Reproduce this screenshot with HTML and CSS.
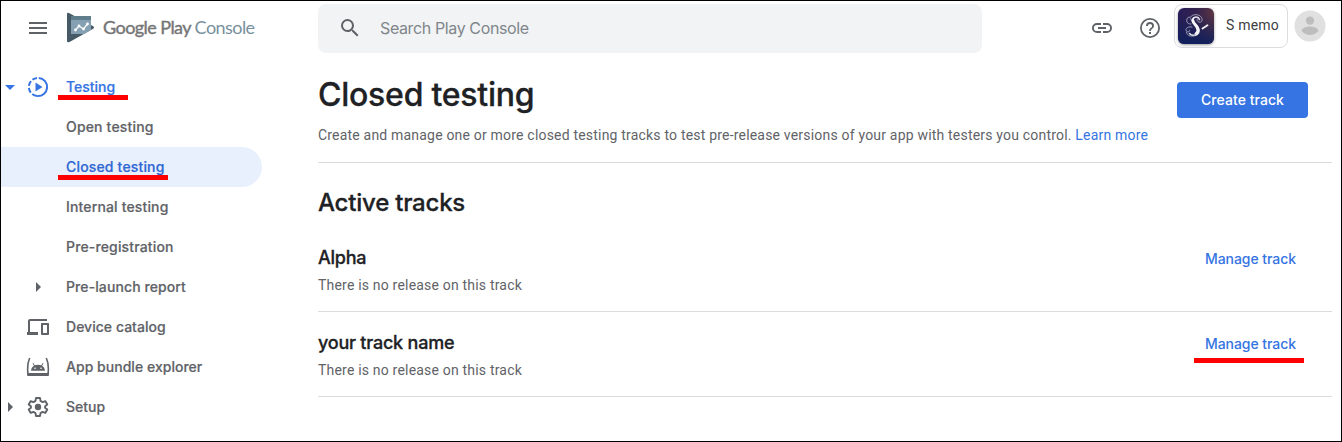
FILE: index.html
```html
<!DOCTYPE html>
<html lang="en">
<head>
<meta charset="utf-8">
<title>Closed testing - Google Play Console</title>
<link rel="stylesheet" href="styles.css">
</head>
<body>
<div class="page">
  <aside class="sidebar">
    <div class="brand">
      <svg class="menu" width="18" height="12" viewBox="0 0 18 12"><path d="M0 0h18v2H0zM0 5h18v2H0zM0 10h18v2H0z" fill="#5f6368"/></svg>
      <svg class="logo" width="28" height="32" viewBox="0 0 28 32">
        <path d="M0 2.200Q0 .3 2 1L26.200 14.200q1.800 1.300 0 2.600L2.500 30Q0 31 0 28.800z" fill="#455a64"/>
        <path d="M4 4h20v14l-7.200 4H4z" fill="#84a0b2"/>
        <path d="M4 4h20v4H4z" fill="#607d8b"/>
        <path d="m8.500 18 3.500-4 4.500 3 4-5" fill="none" stroke="#fff" stroke-width="1.300"/>
        <g fill="#fff"><circle cx="8.500" cy="18" r="1.400"/><circle cx="12" cy="14" r="1.400"/><circle cx="16.500" cy="17" r="1.400"/><circle cx="20.500" cy="12" r="1.400"/></g>
      </svg>
      <span class="wordmark"><b>Google Play</b> <span class="console">Console</span></span>
    </div>
    <nav class="nav">
      <a class="item active"><span class="arrow down"></span>
        <svg class="icon" width="24" height="24" viewBox="0 0 24 24"><path d="M12 2.900a9.100 9.100 0 0 1 0 18.200" fill="none" stroke="currentColor" stroke-width="2" transform="rotate(5 12 12)"/><path d="M11 21.050A9.100 9.100 0 0 1 11 2.950" fill="none" stroke="currentColor" stroke-width="2" stroke-dasharray="5.200 2"/><path d="M9.500 7.500v9l7-4.500z" fill="currentColor"/></svg>
        <span class="label underlined testing">Testing</span></a>
      <a class="item"><span class="label open">Open testing</span></a>
      <a class="item active selected"><span class="label underlined closed">Closed testing</span></a>
      <a class="item"><span class="label internal">Internal testing</span></a>
      <a class="item"><span class="label prereg">Pre-registration</span></a>
      <a class="item nested"><span class="arrow right"></span><span class="label prelaunch">Pre-launch report</span></a>
      <a class="item">
        <svg class="icon" width="24" height="24" viewBox="0 0 24 24"><path d="M4 6h17V4H4c-1.100 0-2 .9-2 2v11H1v3h11v-3H4zM22 8h-6c-.6 0-1 .4-1 1v10c0 .6.4 1 1 1h6c.6 0 1-.4 1-1V9c0-.6-.4-1-1-1zm-1 10h-4v-8h4z" fill="currentColor"/></svg>
        <span class="label device">Device catalog</span></a>
      <a class="item">
        <svg class="icon" width="24" height="24" viewBox="0 0 24 24"><path d="M3.700 3C1.300 8 1.300 13.500 2 19.500h20C22.700 13.500 22.700 8 20.300 3" fill="none" stroke="currentColor" stroke-width="1.600"/><path d="M1.300 18h21.400v3H1.300z" fill="currentColor"/><path d="M5 15.800c.2-2.300 1.200-4 2.900-5.100L6.500 8.300l.7-.4 1.500 2.400c2-.9 4.600-.9 6.600 0l1.500-2.400.7.400-1.400 2.400c1.700 1.100 2.700 2.800 2.900 5.100z" fill="currentColor"/><circle cx="9" cy="13.300" r=".8" fill="#fff"/><circle cx="15" cy="13.300" r=".8" fill="#fff"/></svg>
        <span class="label bundle">App bundle explorer</span></a>
      <a class="item"><span class="arrow right"></span>
        <svg class="icon" width="24" height="24" viewBox="0 0 24 24"><path d="M10 3h4l.5 2.900 2.100 1.200 2.700-1 2 3.400-2.200 1.800v1.400l2.200 1.800-2 3.400-2.700-1-2.100 1.200L14 21h-4l-.5-2.900-2.100-1.200-2.700 1-2-3.400 2.200-1.800v-1.400L2.700 9.500l2-3.400 2.700 1 2.100-1.200z" fill="none" stroke="currentColor" stroke-width="1.900" stroke-linejoin="round"/><circle cx="12" cy="12" r="3.200" fill="currentColor"/></svg>
        <span class="label setup">Setup</span></a>
    </nav>
  </aside>

  <div class="content">
    <header class="topbar">
      <div class="search">
        <svg width="24" height="24" viewBox="0 0 24 24"><path d="M15.500 14h-.79l-.28-.27A6.470 6.470 0 0 0 16 9.500 6.500 6.500 0 1 0 9.500 16c1.610 0 3.090-.59 4.230-1.570l.27.280v.79l5 4.990L20.490 19zm-6 0a4.500 4.500 0 1 1 0-9 4.500 4.500 0 0 1 0 9z" fill="#5f6368"/></svg>
        <span>Search Play Console</span>
      </div>
      <div class="tools">
        <svg class="link" width="24" height="24" viewBox="0 0 24 24"><path d="M3.900 12A3.100 3.100 0 0 1 7 8.900h4V7H7a5 5 0 0 0 0 10h4v-1.900H7A3.100 3.100 0 0 1 3.900 12zM8 13h8v-2H8zm9-6h-4v1.900h4a3.100 3.100 0 0 1 0 6.200h-4V17h4a5 5 0 0 0 0-10z" fill="#5f6368"/></svg>
        <svg class="help" width="24" height="24" viewBox="0 0 24 24"><path d="M11 18h2v-2h-2zm1-16a10 10 0 1 0 0 20 10 10 0 0 0 0-20zm0 18.200a8.200 8.200 0 1 1 0-16.400 8.200 8.200 0 0 1 0 16.400zM12 6a4 4 0 0 0-4 4h1.900a2.100 2.100 0 0 1 4.200 0c0 2-3 1.750-3 5H13c0-2.250 3-2.500 3-5a4 4 0 0 0-4-4z" fill="#5f6368"/></svg>
        <div class="app">
          <svg class="appicon" width="36" height="36" viewBox="0 0 36 36">
            <defs><linearGradient id="night" x1="0" y1="0" x2="1" y2="0"><stop offset="0" stop-color="#271d58"/><stop offset=".5" stop-color="#33224f"/><stop offset="1" stop-color="#5a3442"/></linearGradient><linearGradient id="shade" x1="0" y1="0" x2="0" y2="1"><stop offset=".2" stop-color="#10205c" stop-opacity="0"/><stop offset="1" stop-color="#10205c"/></linearGradient></defs>
            <rect width="36" height="36" fill="url(#night)"/><rect width="36" height="36" fill="url(#shade)"/>
            <g fill="none" stroke="#b9bbcb" stroke-linecap="round"><path d="M21.500 11.500c-1.500-4-7.500-2.500-7 1.500.7 3.500 6.500 5 6.500 9.500 0 5.500-7 6-9.500 3" stroke="#e8e8ee" stroke-width="1.500"/><path d="M14.800 12.500c.7 4 5.700 6 5.200 10-.2 1.500-1 2.700-2 3.300" stroke="#f5f5f8" stroke-width="3"/><path d="M13 16c-3 .5-5-2-4-5s4-2 4 .5M12.500 9c2-3.500 9-3 11 .5s-1 6-3.500 4 0-4 1.500-2M14 19c-4-1-7.500 2-5.500 4s4 0 3-1M8.500 24c0 4.500 6.500 5.500 9.500 2.500" stroke-width=".8"/><path d="m24.500 20.500 5-3.300" stroke="#eee" stroke-width="1.900"/></g>
          </svg>
          <span>S memo</span>
        </div>
        <svg class="avatar" width="32" height="32" viewBox="0 0 32 32"><circle cx="16" cy="16" r="15.500" fill="#e0e0e0"/><circle cx="16" cy="10.600" r="4.200" fill="#bdbdbd"/><path d="M16 16.500c4.700 0 8.300 2.300 8.300 4.100 0 1.600-4.300 4.400-8.300 4.400s-8.300-2.800-8.300-4.400c0-1.800 3.600-4.100 8.300-4.100z" fill="#bdbdbd"/></svg>
      </div>
    </header>

    <main>
      <section class="intro">
        <div>
          <h1>Closed testing</h1>
          <p class="desc">Create and manage one or more closed testing tracks to test pre-release versions of your app with testers you control. <a>Learn more</a></p>
        </div>
        <button class="create"><span>Create track</span></button>
      </section>
      <h2>Active tracks</h2>
      <section class="track">
        <div><h3 class="alpha">Alpha</h3><p>There is no release on this track</p></div>
        <a class="manage">Manage track</a>
      </section>
      <section class="track second">
        <div><h3 class="custom">your track name</h3><p>There is no release on this track</p></div>
        <a class="manage marked">Manage track</a>
      </section>
    </main>
  </div>
</div>
</body>
</html>
```
FILE: styles.css
```css
* { box-sizing: border-box; }
body { margin: 0; background: #fff; }
h1, h2, h3, p { margin: 0; font-weight: 500; }
svg { display: block; flex: none; }

.page {
  display: grid;
  grid-template-columns: 317px 1fr;
  width: 1342px;
  height: 442px;
  border: 1px solid #000;
  overflow: hidden;
  font-family: Inter, "Liberation Sans", sans-serif;
  color: #202124;
}

/* Sidebar */
.brand { display: flex; align-items: center; height: 54px; padding-left: 28px; }
.logo { margin: -1px 0 0 20px; }
.wordmark { margin: -2px 0 0 8px; font: 400 18px/24px Lato, sans-serif; color: #757575; white-space: nowrap; letter-spacing: -0.56px; }
.wordmark b { font-weight: 400; -webkit-text-stroke: .4px #757575; }
.console { color: #78909c; }
.nav { padding-top: 12px; }
.item {
  display: grid;
  grid-template-columns: 25px 24px 1fr;
  align-items: center;
  width: 261px;
  height: 40px;
  font-size: 14px;
  line-height: 20px;
  font-weight: 500;
  color: #5f6368;
}
.item.active { color: #3574e2; }
.item.selected { background: #e8f0fe; color: #2f67d2; border-radius: 0 20px 20px 0; }
.icon { grid-column: 2; }
.label { grid-column: 3; justify-self: start; margin-left: 16px; white-space: nowrap; -webkit-text-stroke: .2px currentColor; }
.open, .closed { letter-spacing: .17px; }
.internal, .prereg { letter-spacing: .15px; }
.prelaunch { letter-spacing: .1px; }
.device, .bundle { letter-spacing: .03px; }
.arrow { grid-column: 1; width: 0; height: 0; border: 5px solid transparent; }
.arrow.down { margin: 5px 0 0 4px; border-top-color: currentColor; }
.arrow.right { margin-left: 7px; border-left-color: currentColor; border-right-width: 0; }
.nested .arrow { grid-column: 2; margin-left: 10px; }
.underlined { position: relative; }
.underlined::after { content: ""; position: absolute; left: -8px; top: 18px; height: 5px; background: #f00; }
.testing::after { width: 70px; }
.closed::after { width: 110px; }

/* Top bar */
.topbar { display: flex; justify-content: space-between; height: 54px; }
.search {
  display: flex;
  align-items: center;
  gap: 18px;
  width: 664px;
  height: 49px;
  margin-top: 3px;
  padding-left: 20px;
  border-radius: 8px;
  background: #f1f3f4;
  color: #80868b;
  font-size: 16px;
  letter-spacing: -.38px;
}
.search svg, .search span { margin-top: -2px; }
.tools { display: flex; padding-right: 15px; }
.link { margin-top: 15px; }
.help { margin: 15px 12px 0 24px; }
.app {
  display: flex;
  align-items: center;
  width: 114px;
  height: 44px;
  margin-top: 3px;
  padding-left: 3px;
  border: 1px solid #dadce0;
  border-radius: 8px;
  font: 400 14px/20px Roboto, sans-serif;
  color: #3c4043;
  letter-spacing: .2px;
}
.appicon { border-radius: 6px; box-shadow: 0 1px 3px rgba(0, 0, 0, .4); }
.app span { margin: -2px 0 0 12px; white-space: nowrap; }
.avatar { margin: 9px 0 0 6px; }

/* Main content */
main { width: 1014px; }
.intro {
  display: flex;
  justify-content: space-between;
  align-items: flex-start;
  height: 108px;
  padding: 20px 24px 0 0;
  border-bottom: 1px solid #dadce0;
}
h1 { font-size: 32px; line-height: 40px; letter-spacing: -.25px; -webkit-text-stroke: .3px currentColor; }
p { font: 400 14px/20px Roboto, sans-serif; letter-spacing: .194px; color: #5f6368; white-space: nowrap; }
.desc { margin-top: 10px; }
.desc a, .manage { color: #3574e2; }
.create {
  width: 131px;
  height: 36px;
  margin-top: 7px;
  padding: 0;
  border: 0;
  border-radius: 4px;
  background: #3574e2;
  color: #fff;
  font: 500 14px/20px Inter, sans-serif;
  letter-spacing: .06px;
}
h2 { height: 64px; padding-top: 24px; font-size: 24px; line-height: 32px; letter-spacing: -.22px; -webkit-text-stroke: .3px currentColor; }
.track {
  display: flex;
  justify-content: space-between;
  height: 85px;
  padding: 18px 36px 0 0;
  border-bottom: 1px solid #dadce0;
}
h3 { font-size: 18px; line-height: 26px; margin-bottom: 4px; letter-spacing: -.22px; -webkit-text-stroke: .3px currentColor; }
.manage { position: relative; align-self: flex-start; margin-top: 4px; font-size: 14px; line-height: 20px; font-weight: 500; letter-spacing: -.06px; }
.marked::after { content: ""; position: absolute; left: -11px; top: 24px; width: 110px; height: 5px; background: #f00; }
```
